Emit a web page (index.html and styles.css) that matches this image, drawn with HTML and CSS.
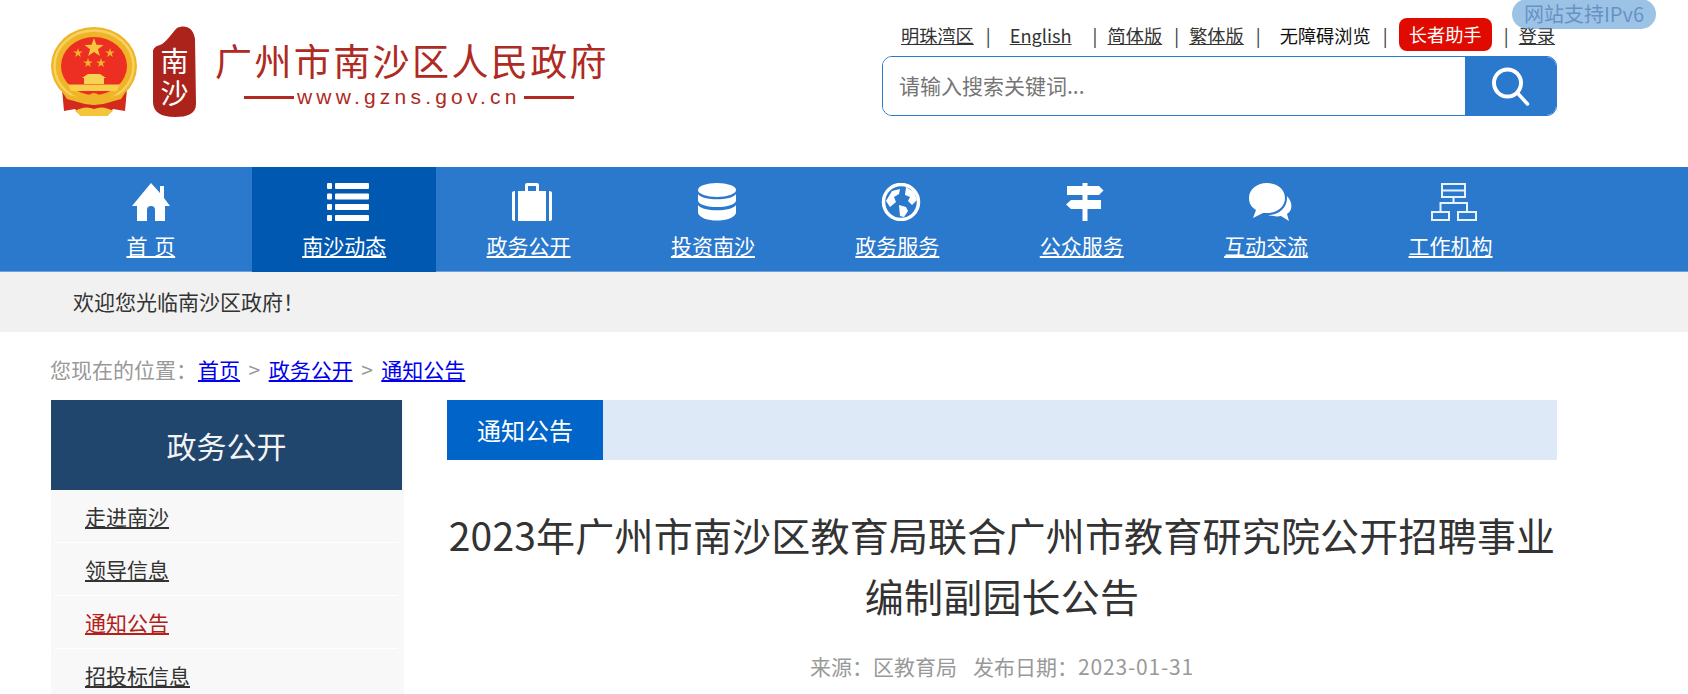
FILE: index.html
```html
<!DOCTYPE html>
<html lang="zh-CN">
<head>
<meta charset="utf-8">
<title>广州市南沙区人民政府</title>
<link rel="stylesheet" href="styles.css">
</head>
<body>
<div class="ipv6">网站支持IPv6</div>
<header class="header">
  <div class="logo">
    <svg class="emblem" viewBox="0 0 86 90" width="86" height="90" aria-hidden="true">
      <path d="M11 62 L13 84 L24 82 L30 89 L56 89 L62 82 L74 84 L76 62 Z" fill="#d42a1e"/>
      <ellipse cx="43" cy="39" rx="43" ry="39" fill="#f0b429"/>
      <ellipse cx="43" cy="39" rx="39.500" ry="35.500" fill="none" stroke="#f7d25e" stroke-width="2.500"/>
      <ellipse cx="43" cy="39" rx="33" ry="29" fill="#ec2f22"/>
      <polygon fill="#f7c63c" points="43,11 45.400,17.700 52.500,17.900 46.900,22.200 48.900,29 43,25 37.100,29 39.100,22.200 33.500,17.900 40.600,17.700"/>
      <polygon fill="#f0b429" points="27,21 28.100,24.500 31.800,24.500 28.800,26.600 29.900,30 27,27.900 24.100,30 25.200,26.600 22.200,24.500 25.900,24.500"/>
      <polygon fill="#f0b429" points="59,21 60.100,24.500 63.800,24.500 60.800,26.600 61.900,30 59,27.900 56.100,30 57.200,26.600 54.200,24.500 57.900,24.500"/>
      <polygon fill="#f0b429" points="37,31 38.100,34.500 41.800,34.500 38.800,36.600 39.900,40 37,37.900 34.100,40 35.200,36.600 32.200,34.500 35.900,34.500"/>
      <polygon fill="#f0b429" points="50,31 51.100,34.500 54.800,34.500 51.800,36.600 52.900,40 50,37.900 47.100,40 48.200,36.600 45.200,34.500 48.900,34.500"/>
      <path d="M31 51 L37 47 L49 47 L55 51 Z M33 51 H53 V57 H33 Z" fill="#f8d255"/>
      <path d="M17 57.500 H69 L66 64 H20 Z" fill="#f8cf4a"/>
      <path d="M12 66 Q30 72 43 70 Q56 72 74 66 L70 72 Q55 77 43 75 Q31 77 16 72 Z" fill="#f0b429"/>
      <circle cx="43" cy="72" r="6" fill="#f0b429"/>
      <path d="M24 84 Q34 78 43 82 Q52 78 62 84 L56 89 L30 89 Z" fill="#f4c53a"/>
    </svg>
    <svg class="seal" viewBox="0 0 43 91" width="43" height="91">
      <path d="M7 19 C13 17 18 8 24 2 C31 -1 40 0 42 13 L43 78 C43 88 34 91 22 91 C8 91 0 86 0 76 L0 26 C0 22 3 20 7 19 Z" fill="#ab231b"/>
      <text class="seal-text" x="21.500" y="21">南沙</text>
    </svg>
    <div class="logo-words">
      <div class="logo-name">广州市南沙区人民政府</div>
      <div class="logo-url"><span class="dash"></span><span class="url-text">www.gzns.gov.cn</span><span class="dash"></span></div>
    </div>
  </div>
  <div class="tools">
    <nav class="toplinks">
      <a href="#">明珠湾区</a><span class="sep">|</span>
      <a href="#" class="en">English</a><span class="sep">|</span>
      <a href="#">简体版</a><span class="sep">|</span>
      <a href="#">繁体版</a><span class="sep">|</span>
      <span class="plain">无障碍浏览</span><span class="sep">|</span>
      <span class="elder">长者助手</span><span class="sep">|</span>
      <a href="#">登录</a>
    </nav>
    <form class="search">
      <input class="search-input" type="text" placeholder="请输入搜索关键词...">
      <button class="search-btn" type="button" aria-label="搜索">
        <svg viewBox="0 0 44 44" width="44" height="44"><circle cx="18.500" cy="19" r="13.500" fill="none" stroke="#fff" stroke-width="4"/><path d="M28.500 29 L38.500 40" stroke="#fff" stroke-width="3.500" stroke-linecap="round"/></svg>
      </button>
    </form>
  </div>
</header>

<nav class="mainnav">
  <a class="nav-item home" href="#">
    <svg viewBox="0 0 44 38" width="44" height="38"><path d="M22 0 L31 10 V3 H35 V15 L41 23 H36 V38 H26 V27 A4 4 0 0 0 18 27 V38 H8 V23 H3 Z" fill="#fff"/></svg>
    <span>首 页</span>
  </a>
  <a class="nav-item active" href="#">
    <svg viewBox="0 0 44 38" width="44" height="38"><g fill="#fff"><rect x="1" y="0" width="5" height="6" rx="1"/><rect x="9" y="0" width="34" height="6" rx="1"/><rect x="1" y="10.500" width="5" height="6" rx="1"/><rect x="9" y="10.500" width="34" height="6" rx="1"/><rect x="1" y="21" width="5" height="6" rx="1"/><rect x="9" y="21" width="34" height="6" rx="1"/><rect x="1" y="32" width="5" height="6" rx="1"/><rect x="9" y="32" width="34" height="6" rx="1"/></g></svg>
    <span>南沙动态</span>
  </a>
  <a class="nav-item" href="#">
    <svg viewBox="0 0 44 38" width="44" height="38"><path d="M15 8 V2 Q15 0 17 0 H27 Q29 0 29 2 V8 H26 V3 H18 V8 Z M8 8 H36 V38 H8 Z M2 10 Q2 8 5 8 V38 Q2 38 2 36 Z M39 8 Q42 8 42 10 V36 Q42 38 39 38 Z" fill="#fff"/></svg>
    <span>政务公开</span>
  </a>
  <a class="nav-item" href="#">
    <svg viewBox="0 0 44 38" width="44" height="38"><g fill="#fff"><ellipse cx="22" cy="7" rx="19" ry="7"/><path d="M3 11 C7 18 37 18 41 11 V18 C38 26 6 26 3 18 Z"/><path d="M3 22 C7 29 37 29 41 22 V30 C38 40 6 40 3 30 Z"/></g></svg>
    <span>投资南沙</span>
  </a>
  <a class="nav-item" href="#">
    <svg viewBox="0 0 44 38" width="44" height="38"><ellipse cx="22" cy="19" rx="17.500" ry="17.500" fill="none" stroke="#fff" stroke-width="3.500"/><path d="M13 8 L21 6 L20 11 L15 14 L17 19 L11 24 L7 18 Z M27 4 L35 9 L38 17 L33 22 L29 18 L31 14 L26 12 Z M20 22 L27 24 L29 28 L25 34 L21 33 Z" fill="#fff"/></svg>
    <span>政务服务</span>
  </a>
  <a class="nav-item" href="#">
    <svg viewBox="0 0 44 38" width="44" height="38"><g fill="#fff"><rect x="19.500" y="0" width="5" height="38"/><path d="M4 3 H36 L40.500 7.500 L36 12 H4 Z"/><path d="M8 17 H38 V26 H8 L3 21.500 Z"/></g></svg>
    <span>公众服务</span>
  </a>
  <a class="nav-item" href="#">
    <svg viewBox="0 0 44 38" width="44" height="38"><path d="M19 0 C30 0 37 7 37 15 C37 24 29 30 19 30 C18 30 16 30 15 30 L5 35 L8 27 C3 24 1 20 1 15 C1 7 8 0 19 0 Z" fill="#fff"/><path d="M39 13 C43 17 44 22 43 26 C42 29 40 30 39 31 L41 38 L33 33 C29 34 23 33 20 32 C30 32 40 25 39 13 Z" fill="#fff"/></svg>
    <span>互动交流</span>
  </a>
  <a class="nav-item" href="#">
    <svg viewBox="0 0 46 38" width="46" height="38"><g fill="none" stroke="#e9f2fb" stroke-width="2"><rect x="11" y="1" width="23" height="13"/><path d="M11 7.500 H34 M22.500 14 V20 M9.500 29 V20 H36 V29"/><rect x="1" y="29" width="17" height="8"/><rect x="27" y="29" width="18" height="8"/></g></svg>
    <span>工作机构</span>
  </a>
</nav>

<div class="welcome">欢迎您光临南沙区政府！</div>

<div class="crumbs">
  <span class="crumb-label">您现在的位置：</span><a href="#">首页</a><span class="crumb-sep">&gt;</span><a href="#">政务公开</a><span class="crumb-sep">&gt;</span><a href="#">通知公告</a>
</div>

<main class="layout">
  <aside class="side">
    <h2 class="side-title">政务公开</h2>
    <ul class="side-list">
      <li><a href="#">走进南沙</a></li>
      <li><a href="#">领导信息</a></li>
      <li><a href="#" class="current">通知公告</a></li>
      <li><a href="#">招投标信息</a></li>
    </ul>
  </aside>
  <section class="content">
    <div class="tabbar"><div class="tab">通知公告</div></div>
    <h1 class="title">2023年广州市南沙区教育局联合广州市教育研究院公开招聘事业编制副园长公告</h1>
    <p class="meta"><span>来源：区教育局</span><span>发布日期：<span class="date">2023-01-31</span></span></p>
  </section>
</main>
</body>
</html>
```
FILE: styles.css
```css
* { box-sizing: border-box; }
html, body { height: 100%; }
body {
  margin: 0;
  overflow: hidden;
  position: relative;
  background: #fff;
  color: #333;
  font-family: "Noto Sans CJK SC", "Noto Sans", sans-serif;
  font-size: 21px;
}
a { color: inherit; }

.ipv6 {
  position: absolute;
  left: 1512px;
  top: -1px;
  width: 144px;
  height: 30px;
  border-radius: 15px;
  background: #5c9bd5;
  color: #004a9f;
  opacity: 0.6;
  font-size: 20px;
  line-height: 30px;
  text-align: center;
  white-space: nowrap;
}

.header {
  height: 167px;
  padding: 18px 131px 0 51px;
  display: flex;
  justify-content: space-between;
}
.logo { display: flex; align-items: flex-start; padding-top: 8px; }
.emblem { flex: none; margin-top: 1px; }
.seal { flex: none; margin-left: 16px; }
.seal-text {
  font-family: "Noto Sans CJK SC", sans-serif;
  font-size: 28px;
  letter-spacing: 4px;
  writing-mode: vertical-rl;
  fill: #fff;
}
.logo-words { margin-left: 19px; padding-top: 9px; color: #ae2a22; width: 392px; }
.logo-name {
  font-size: 37px;
  line-height: 50px;
  letter-spacing: 2.400px;
  white-space: nowrap;
  font-family: "Noto Sans CJK SC", sans-serif;
}
.logo-url {
  display: flex;
  align-items: center;
  height: 24px;
  margin-left: 29px;
  gap: 3px;
  font-family: "Liberation Sans", sans-serif;
}
.dash { width: 50px; height: 3px; background: #ae2a22; flex: none; }
.url-text { font-size: 21px; letter-spacing: 4.200px; line-height: 24px; white-space: nowrap; }

.tools { width: 675px; display: flex; flex-direction: column; }
.toplinks {
  height: 33px;
  padding-left: 19px;
  display: flex;
  align-items: center;
  font-size: 18.200px;
  color: #333;
  white-space: nowrap;
}
.sep { margin: 0 12px; width: 3px; text-align: center; color: #333; font-size: 18px; }
.toplinks .en { margin: 0 9px; }
.plain { color: #111; margin-left: 9px; }
.elder {
  height: 33px;
  width: 93px;
  margin-left: 1px;
  line-height: 32px;
  text-align: center;
  color: #fff;
  background: #e00a00;
  border-radius: 8px;
}
.search {
  margin-top: 5px;
  height: 60px;
  display: flex;
  border: 1px solid #2b79cc;
  border-radius: 10px;
  overflow: hidden;
}
.search-input {
  flex: 1;
  min-width: 0;
  border: 0;
  outline: 0;
  padding: 0 0 2px 16px;
  font: inherit;
  font-size: 21px;
  color: #333;
  background: #fff;
}
.search-input::placeholder { color: #757575; opacity: 1; }
.search-btn {
  width: 92px;
  flex: none;
  margin: -1px -1px -1px 0;
  padding: 0;
  border: 0;
  background: #2b79cc;
  display: flex;
  align-items: center;
  justify-content: center;
}

.mainnav {
  height: 105px;
  padding-left: 67.600px;
  display: flex;
  background: #2b79cc;
  box-shadow: inset 0 -1px 0 #6aa3dc;
}
.nav-item {
  width: 184.400px;
  padding-top: 16px;
  display: flex;
  flex-direction: column;
  align-items: center;
  color: #fff;
  font-size: 21px;
  line-height: 32px;
}
.nav-item svg { margin: 0 0 8px 7.500px; }
.nav-item.home { padding-right: 18px; word-spacing: 2px; }
.nav-item.home svg { margin-left: 0; }
.nav-item.active { background: #0058b0; }

.welcome {
  height: 60px;
  padding-left: 73px;
  background: #f1f1f1;
  line-height: 58px;
  color: #333;
}

.crumbs {
  height: 68px;
  padding: 20px 0 0 50px;
  line-height: 34px;
  color: #0000ee;
}
.crumb-label, .crumb-sep { color: #999; }
.crumb-label { margin-right: 1px; }
.crumb-sep { margin: 0 8.500px; }
.crumbs a { color: #0000ee; }

.layout {
  padding: 0 131px 0 51px;
  display: flex;
  align-items: stretch;
}
.side { width: 353px; flex: none; height: 294px; background: #f8f8f8; }
.side-title {
  width: 351px;
  height: 90px;
  margin: 0;
  background: #20466d;
  color: #f4f4f4;
  font-size: 30px;
  font-weight: 400;
  line-height: 90px;
  text-align: center;
}
.side-list { margin: 0; padding: 0 6px 0 4px; list-style: none; }
.side-list li {
  height: 53px;
  padding-left: 30px;
  line-height: 52px;
  border-bottom: 1px solid #fff;
}
.side-list li a { color: #333; }
.side-list li a.current { color: #b2201a; }

.content { margin-left: 43px; width: 1110px; flex: none; }
.tabbar { height: 60px; background: #dde9f7; }
.tab {
  width: 156px;
  height: 60px;
  background: #0064c8;
  color: #fff;
  font-size: 24px;
  line-height: 60px;
  text-align: center;
}
.title {
  margin: 44px 0 0;
  font-size: 39px;
  font-weight: 400;
  letter-spacing: 0.200px;
  line-height: 61px;
  text-align: center;
  color: #333;
}
.meta {
  margin: 25px 0 0;
  display: flex;
  justify-content: center;
  gap: 16px;
  font-size: 21px;
  line-height: 30px;
  color: #999;
}
.date { letter-spacing: 0.800px; }
```
